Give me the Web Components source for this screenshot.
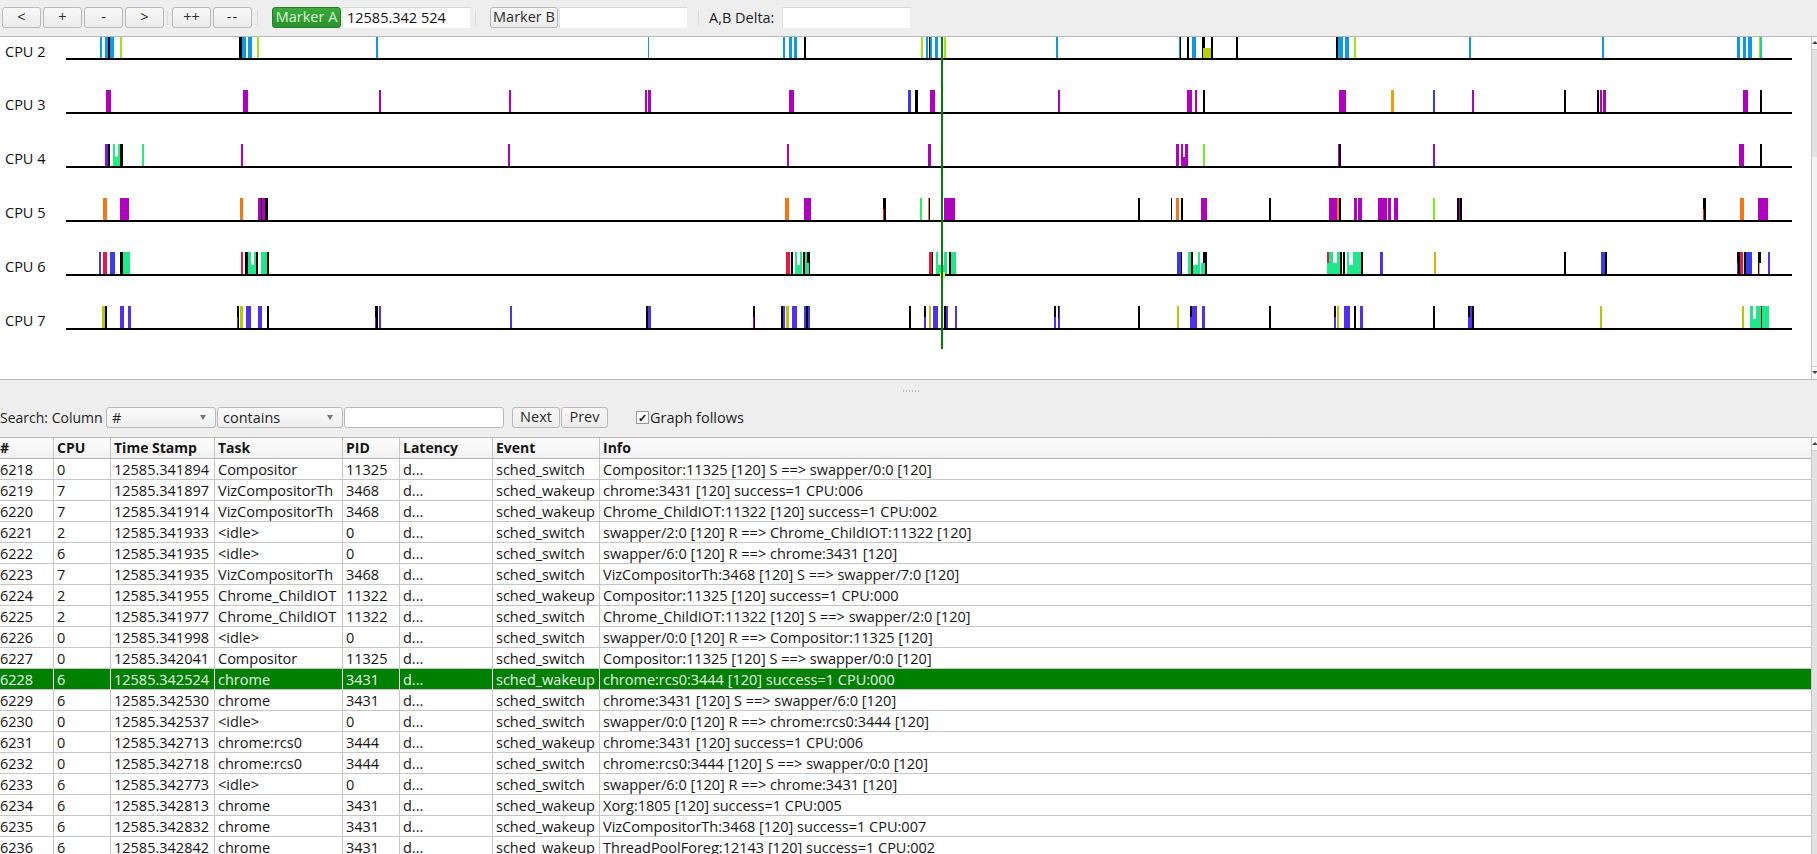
<!DOCTYPE html>
<html><head><meta charset="utf-8"><style>
html,body{margin:0;padding:0;height:854px;overflow:hidden;background:#eee;font:14.5px "Open Sans",sans-serif;color:#111}
app-shell{display:block}
</style></head><body>
<app-shell>
<tool-bar></tool-bar>
<cpu-graph></cpu-graph>
<search-bar></search-bar>
<trace-table></trace-table>
</app-shell>
<script>
const C={b:'#0c9ae6',k:'#000',l:'#9fe80f',o:'#b8d000',t:'#10d0b8',p:'#b000c0',u:'#3a3af0',a:'#f0a000',g:'#20e88a',G:'#20f080',L:'#70f020',v:'#8010f0',O:'#f87510',r:'#e81840',V:'#5030f5',y:'#e0b000',n:'#30f050',m:'#80f010',Y:'#b8c800',x:'#fff',R:'#e03020'};
function bars(s){return s.trim().split(/\s+/).map(t=>{const[a,b,c,d]=t.split(',');return{x:+a,w:+b-+a,c:C[c],low:d?+d:0}})}
const ROWS=[
['CPU 2','100,102,b 105,108,b 108,110,k 110,114,b 120,122,l 239,242,k 242,246,b 248,252,b 257,259,l 376,378,b 648,649,b 783,785,b 789,792,b 794,797,b 804,806,k 921,923,l 926,928,b 929,930,k 930,932,b 935,938,b 941,943,k 944,946,l 1056,1058,b 1179,1180,b 1180,1181,k 1187,1189,k 1192,1196,b 1202,1205,k 1203,1211,o,12 1211,1213,k 1236,1238,k 1336,1338,k 1338,1343,b 1345,1349,b 1354,1356,l 1469,1471,b 1602,1604,b 1737,1740,b 1743,1746,b 1748,1752,b 1759,1760,l 1760,1762,t'],
['CPU 3','106,111,p 243,248,p 379,381,p 509,511,p 645,647,p 648,651,p 789,794,p 908,911,u 915,918,k 930,935,p 1058,1060,p 1187,1192,p 1195,1197,p 1203,1205,k 1339,1346,p 1391,1394,a 1433,1435,u 1472,1474,p 1564,1566,k 1597,1599,k 1600,1602,p 1603,1606,p 1743,1748,p 1760,1762,k'],
['CPU 4','105,107,p 107,108,u 108,110,k 113,120,G 115,118,x,-10 120,123,k 142,144,G 241,243,p 508,510,p 787,789,p 928,931,p 1176,1179,p 1181,1188,p 1183,1185,x,-10 1203,1205,L 1338,1339,p 1339,1341,k 1433,1435,v 1739,1744,p 1760,1762,k'],
['CPU 5','103,107,O 120,126,p 126,129,p 240,243,O 258,261,p 261,262,k 262,265,p 265,268,k 785,789,O 804,811,p 883,886,k 883,884,R,11 920,922,n 928,929,O 929,930,k 944,949,p 949,955,p 1138,1140,k 1171,1172,k 1176,1179,O 1181,1183,k 1201,1205,p 1205,1207,p 1269,1271,k 1329,1337,p 1337,1339,O 1339,1341,k 1354,1357,p 1358,1362,p 1378,1387,p 1388,1391,p 1394,1398,p 1433,1435,m 1457,1459,k 1459,1460,p 1460,1462,k 1703,1706,k 1703,1704,R,11 1740,1744,O 1758,1768,p'],
['CPU 6','99,101,u 103,107,r 110,115,u 120,123,k 123,130,g 241,243,r 245,248,k 248,256,g 251,254,x,-10 256,258,k 261,267,g 267,269,k 786,790,r 791,793,k 795,802,g 797,800,x,-10 803,805,k 805,807,g 807,810,k 807,809,g,11 929,932,r 932,933,k 936,947,g 938,944,x,-10 949,951,k 951,956,g 1177,1181,u 1181,1182,k 1188,1200,g 1191,1193,k 1193,1198,x,-10 1203,1207,k 1201,1205,g,11 1327,1329,r 1329,1340,g 1333,1337,x,-10 1327,1340,g,11 1340,1342,k 1343,1345,k 1347,1356,g 1349,1353,x,-10 1356,1361,g 1361,1363,k 1380,1383,V 1434,1436,y 1564,1566,k 1601,1605,u 1605,1607,k 1737,1740,k 1737,1738,u,11 1740,1743,r 1744,1746,k 1746,1752,u 1758,1761,k 1759,1761,x,11 1759,1760,a,11 1768,1770,V'],
['CPU 7','102,105,Y 105,107,k 120,124,V 128,131,V 237,239,k 237,238,V,11 240,243,Y 246,251,V 258,262,V 267,269,k 375,378,k 375,376,V,11 379,381,V 510,512,V 646,648,k 648,651,V 753,755,k 753,754,p,11 781,783,k 783,785,V 786,789,Y 792,797,V 804,806,u 806,808,k 808,810,u 909,911,k 924,926,k 924,926,V,11 929,931,Y 933,938,V 944,946,k 946,948,V 955,957,V 1054,1056,k 1054,1056,V,11 1058,1060,V 1058,1059,k,-12 1138,1140,k 1177,1179,Y 1190,1192,k 1190,1192,V,11 1192,1197,V 1202,1205,V 1269,1271,k 1334,1336,k 1334,1336,V,11 1337,1339,Y 1344,1350,V 1354,1356,k 1360,1363,V 1433,1435,k 1468,1470,k 1468,1470,V,11 1470,1472,V 1472,1474,k 1600,1602,Y 1742,1744,Y 1750,1769,g 1753,1756,x,-10 1761,1762,k']
];
class ToolBtn extends HTMLElement{constructor(){super();this.attachShadow({mode:'open'}).innerHTML=`<style>:host{display:inline-flex;align-items:center;justify-content:center;box-sizing:border-box;height:21px;width:var(--w,39px);border:1px solid #bababa;border-radius:3px;background:linear-gradient(#f8f8f8,#ececec);color:#2c2c2c;font-size:14.5px;line-height:1;white-space:nowrap}
:host([on]){background:linear-gradient(#3caa3c,#2b922b);border-color:#2a7d2a;color:#d8f5d8}</style><slot></slot>`}}
customElements.define('tool-btn',ToolBtn);
class FieldBox extends HTMLElement{constructor(){super();this.attachShadow({mode:'open'}).innerHTML=`<style>:host{display:block;box-sizing:border-box;height:21px;width:var(--w,128px);background:#fff;border-top:1px solid #d8d8d8;border-left:1px solid #e4e4e4;padding:0 4px;font-size:14.5px;line-height:20px;color:#111}</style><slot></slot>`}}
customElements.define('field-box',FieldBox);
class ToolBar extends HTMLElement{constructor(){super();this.attachShadow({mode:'open'}).innerHTML=`<style>:host{display:flex;align-items:center;box-sizing:border-box;height:37px;padding:0 0 1px 2px;border-bottom:1px solid #b9b9b9;background:#eee}
.g{display:flex;gap:2px}.s{width:1px;height:14px;background:#dcdcdc}
.lbl{color:#222;font-size:14.5px;white-space:nowrap}</style>
<div class="g"><tool-btn>&lt;</tool-btn><tool-btn>+</tool-btn><tool-btn>-</tool-btn><tool-btn>&gt;</tool-btn></div>
<div class="s" style="margin:0 4px 0 3px"></div>
<div class="g"><tool-btn>++</tool-btn><tool-btn style="letter-spacing:1px">--</tool-btn></div>
<div class="s" style="margin:0 5px 0 5px"></div>
<div class="g" style="margin-left:9px;gap:1px"><tool-btn on style="--w:69px">Marker A</tool-btn><field-box>12585.342 524</field-box></div>
<div class="s" style="margin:0 9px 0 5px"></div>
<div class="g" style="gap:1px;margin-left:5px"><tool-btn style="--w:68px">Marker B</tool-btn><field-box></field-box></div>
<div class="s" style="margin:0 10px 0 11px"></div>
<div class="lbl" style="width:72px">A,B Delta:</div><field-box style="margin-left:1px"></field-box></div>`}}
customElements.define('tool-bar',ToolBar);
class CpuRow extends HTMLElement{
 connectedCallback(){const clip=this.hasAttribute('clip');const h=clip?24:54;
 const label=this.getAttribute('label');const bs=bars(this.getAttribute('bars'));
 const W=1792;const top=h-25;
 const rects=bs.map(b=>{let y=top,hh=24;if(b.low>0){y=top+b.low;hh=24-b.low}else if(b.low<0){hh=-b.low+(b.c==='#fff'?3:0)}
   return `<rect x="${b.x}" y="${y}" width="${b.w}" height="${hh}" fill="${b.c}"/>`}).join('');
 this.attachShadow({mode:'open'}).innerHTML=`<style>:host{display:block;position:relative;height:${h}px}
 svg{display:block;position:absolute;left:0;top:0}.l{position:absolute;left:5px;height:18px;line-height:18px;font-size:14.5px;color:#111}
 </style><svg width="${W}" height="${h}" shape-rendering="crispEdges">${rects}<rect x="66" y="${h-3}" width="${W-66}" height="2" fill="#000"/></svg><div class="l" style="bottom:${clip?0:1}px">${label}</div>`}}
customElements.define('cpu-row',CpuRow);
class ScrollBar extends HTMLElement{connectedCallback(){const d=this.hasAttribute('down');this.attachShadow({mode:'open'}).innerHTML=`<style>:host{display:flex;flex:none;flex-direction:column;width:5px;background:#f3f3f3;border-left:1px solid #c8c8c8}
.btn{flex:none;height:13px;background:#fafafa;border-bottom:1px solid #d0d0d0;position:relative;box-sizing:border-box}
.btn:last-child{border-bottom:0;border-top:1px solid #d0d0d0;margin-top:auto}
.btn i{position:absolute;left:0;border:3px solid transparent}
.up i{top:4px;border-top:0;border-bottom:3px solid #444}.dn i{top:4px;border-bottom:0;border-top:3px solid #444}
.t{flex:none;height:var(--h,20px);background:#e2e2e2}</style><div class="btn up"><i></i></div><div class="t"></div>${d?'<div class="btn dn"><i></i></div>':''}`}}
customElements.define('scroll-bar',ScrollBar);
class CpuGraph extends HTMLElement{constructor(){super();this.attachShadow({mode:'open'}).innerHTML=`<style>:host{display:flex;position:relative;height:343px;background:#fff;overflow:hidden;box-sizing:border-box;border-bottom:1px solid #b9b9b9}
#r{flex:1;min-width:0;overflow:hidden}
.m{position:absolute;left:941px;top:0;width:2px;height:312px;background:#008000}
.y{position:absolute;left:940px;top:235px;width:5px;height:6px;background:#e8f060}
scroll-bar{--h:107px}</style><div id="r"></div><div class="y"></div><div class="m"></div><scroll-bar down></scroll-bar>`;
 const r=this.shadowRoot.getElementById('r');ROWS.forEach((x,i)=>{const e=document.createElement('cpu-row');e.setAttribute('label',x[0]);e.setAttribute('bars',x[1]);if(!i)e.setAttribute('clip','');r.appendChild(e)})}}
customElements.define('cpu-graph',CpuGraph);
class ComboBox extends HTMLElement{constructor(){super();this.attachShadow({mode:'open'}).innerHTML=`<style>:host{display:flex;align-items:center;box-sizing:border-box;height:21px;width:var(--w);border:1px solid #bababa;border-radius:3px;background:linear-gradient(#fbfbfb,#eee);padding:0 5px;color:#222;font-size:14.5px;position:relative}
i{position:absolute;right:9px;top:7px;border:3.5px solid transparent;border-bottom:0;border-top:5px solid #777}</style><slot></slot><i></i>`}}
customElements.define('combo-box',ComboBox);
class SearchBar extends HTMLElement{constructor(){super();this.attachShadow({mode:'open'}).innerHTML=`<style>:host{display:flex;align-items:center;box-sizing:border-box;height:57px;padding:27px 0 9px 0;background:#eee;position:relative;font-size:14.5px;color:#222}
.grip{position:absolute;left:903px;top:10px;width:18px;height:2px;background:repeating-linear-gradient(90deg,#bbb 0 1px,transparent 1px 3px)}
.ck{box-sizing:border-box;width:13px;height:13px;background:#fff;border:1px solid #999;font-size:11px;font-weight:700;line-height:11px;text-align:center;margin:0 1px 0 28px;color:#111}
.in{box-sizing:border-box;width:160px;height:21px;background:#fff;border:1px solid #bababa;border-radius:3px;margin:0 8px 0 1px}
combo-box{margin-left:1px}</style><div class="grip"></div><span style="width:105px;white-space:nowrap;font-size:14px">Search: Column</span><combo-box style="--w:110px;margin-left:1px">#</combo-box><combo-box style="--w:126px">contains</combo-box><div class="in"></div><tool-btn style="--w:48px">Next</tool-btn><tool-btn style="--w:47px;margin-left:1px">Prev</tool-btn><div class="ck">✓</div><span>Graph follows</span>`}}
customElements.define('search-bar',SearchBar);
const DATA=`6218|0|12585.341894|Compositor|11325|sched_switch|Compositor:11325 [120] S ==> swapper/0:0 [120]
6219|7|12585.341897|VizCompositorTh|3468|sched_wakeup|chrome:3431 [120] success=1 CPU:006
6220|7|12585.341914|VizCompositorTh|3468|sched_wakeup|Chrome_ChildIOT:11322 [120] success=1 CPU:002
6221|2|12585.341933|<idle>|0|sched_switch|swapper/2:0 [120] R ==> Chrome_ChildIOT:11322 [120]
6222|6|12585.341935|<idle>|0|sched_switch|swapper/6:0 [120] R ==> chrome:3431 [120]
6223|7|12585.341935|VizCompositorTh|3468|sched_switch|VizCompositorTh:3468 [120] S ==> swapper/7:0 [120]
6224|2|12585.341955|Chrome_ChildIOT|11322|sched_wakeup|Compositor:11325 [120] success=1 CPU:000
6225|2|12585.341977|Chrome_ChildIOT|11322|sched_switch|Chrome_ChildIOT:11322 [120] S ==> swapper/2:0 [120]
6226|0|12585.341998|<idle>|0|sched_switch|swapper/0:0 [120] R ==> Compositor:11325 [120]
6227|0|12585.342041|Compositor|11325|sched_switch|Compositor:11325 [120] S ==> swapper/0:0 [120]
6228|6|12585.342524|chrome|3431|sched_wakeup|chrome:rcs0:3444 [120] success=1 CPU:000
6229|6|12585.342530|chrome|3431|sched_switch|chrome:3431 [120] S ==> swapper/6:0 [120]
6230|0|12585.342537|<idle>|0|sched_switch|swapper/0:0 [120] R ==> chrome:rcs0:3444 [120]
6231|0|12585.342713|chrome:rcs0|3444|sched_wakeup|chrome:3431 [120] success=1 CPU:006
6232|0|12585.342718|chrome:rcs0|3444|sched_switch|chrome:rcs0:3444 [120] S ==> swapper/0:0 [120]
6233|6|12585.342773|<idle>|0|sched_switch|swapper/6:0 [120] R ==> chrome:3431 [120]
6234|6|12585.342813|chrome|3431|sched_wakeup|Xorg:1805 [120] success=1 CPU:005
6235|6|12585.342832|chrome|3431|sched_wakeup|VizCompositorTh:3468 [120] success=1 CPU:007
6236|6|12585.342842|chrome|3431|sched_wakeup|ThreadPoolForeg:12143 [120] success=1 CPU:002`.split('\n').map(l=>l.split('|'));
const COLS='54px 57px 104px 128px 57px 93px 107px 1fr';
class TraceRow extends HTMLElement{
 connectedCallback(){const v=JSON.parse(this.getAttribute('v'));const hd=this.hasAttribute('head'),sel=this.hasAttribute('sel');
 this.attachShadow({mode:'open'}).innerHTML=`<style>:host{display:grid;grid-template-columns:${COLS};height:21px;box-sizing:border-box;border-bottom:1px solid ${hd?'#b4b4b4':'#c6c6c6'};background:${hd?'linear-gradient(#fafafa,#f8f8f8 50%,#efefef)':sel?'#008000':'#fff'};color:${sel?'#e8f5e8':'#151515'};font-weight:${hd?700:400};font-size:${hd?14:14.5}px;line-height:${hd?20:21}px}
 div{box-sizing:border-box;padding-left:3px;border-right:1px solid ${hd?'#c6c6c6':sel?'#fff':'#c6c6c6'};white-space:nowrap;overflow:hidden}div:first-of-type{padding-left:0}div:last-child{border:0;overflow:visible}</style>${v.map(x=>`<div>${x.replace(/</g,'&lt;')}</div>`).join('')}`}}
customElements.define('trace-row',TraceRow);
class TraceTable extends HTMLElement{constructor(){super();this.attachShadow({mode:'open'}).innerHTML=`<style>:host{display:flex;position:relative;height:417px;overflow:hidden;background:#fff;border-top:1px solid #b9b9b9}
#r{flex:1;min-width:0}scroll-bar{--h:404px}</style><div id="r"></div><scroll-bar></scroll-bar>`;
 const r=this.shadowRoot.getElementById('r');
 const add=(v,a)=>{const e=document.createElement('trace-row');e.setAttribute('v',JSON.stringify(v));if(a)e.setAttribute(a,'');r.appendChild(e)};
 add(['#','CPU','Time Stamp','Task','PID','Latency','Event','Info'],'head');
 DATA.forEach(d=>add([d[0],d[1],d[2],d[3],d[4],'d...',d[5],d[6]],d[0]==='6228'?'sel':''));}}
customElements.define('trace-table',TraceTable);
</script>
</body></html>
